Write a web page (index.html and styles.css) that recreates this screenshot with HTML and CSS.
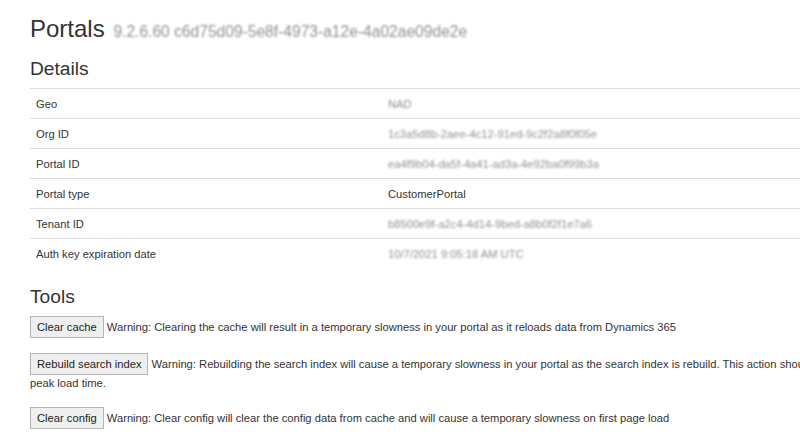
FILE: index.html
```html
<!DOCTYPE html>
<html lang="en">
<head>
<meta charset="utf-8">
<title>Portals</title>
<link rel="stylesheet" href="styles.css">
</head>
<body>
<div class="page">
  <h1 class="title">Portals <small class="redacted">9.2.6.60 c6d75d09-5e8f-4973-a12e-4a02ae09de2e</small></h1>

  <h2 class="section">Details</h2>
  <table class="details">
    <tbody>
      <tr><td class="key">Geo</td><td><span class="redacted">NAD</span></td></tr>
      <tr><td class="key">Org ID</td><td><span class="redacted">1c3a5d8b-2aee-4c12-91ed-9c2f2a8f0f05e</span></td></tr>
      <tr><td class="key">Portal ID</td><td><span class="redacted">ea4f9b04-da5f-4a41-ad3a-4e92ba0f99b3a</span></td></tr>
      <tr><td class="key">Portal type</td><td>CustomerPortal</td></tr>
      <tr><td class="key">Tenant ID</td><td><span class="redacted">b8500e9f-a2c4-4d14-9bed-a8b0f2f1e7a6</span></td></tr>
      <tr><td class="key">Auth key expiration date</td><td><span class="redacted">10/7/2021 9:05:18 AM UTC</span></td></tr>
    </tbody>
  </table>

  <h2 class="section tools-head">Tools</h2>
  <p class="tool"><button class="btn" type="button">Clear cache</button> Warning: Clearing the cache will result in a temporary slowness in your portal as it reloads data from Dynamics 365</p>
  <p class="tool"><button class="btn" type="button">Rebuild search index</button> Warning: Rebuilding the search index will cause a temporary slowness in your portal as the search index is rebuild. This action should be performed during non-peak load time.</p>
  <p class="tool"><button class="btn" type="button">Clear config</button> Warning: Clear config will clear the config data from cache and will cause a temporary slowness on first page load</p>
</div>
</body>
</html>
```

FILE: styles.css
```css
html {
  overflow: hidden;
}

body {
  margin: 0;
  background: #ffffff;
  color: #333333;
  font-family: "Liberation Sans", Arial, sans-serif;
  font-size: 11.2px;
  line-height: 16px;
}

.page {
  width: 933px;
  padding: 0 30px;
}

.title {
  margin: 15px 0 0;
  font-size: 24px;
  font-weight: 400;
  line-height: 28px;
}

.title small {
  font-size: 15.6px;
  line-height: 1;
  margin-left: 2px;
}

.redacted {
  color: #909090;
  filter: blur(1.2px);
  display: inline-block;
  line-height: 1;
}

.section {
  margin: 14px 0 7px;
  font-size: 19.2px;
  font-weight: 400;
  line-height: 24px;
}

.tools-head {
  margin-top: 17px;
}

.details {
  width: 100%;
  border-collapse: collapse;
}

.details td {
  border-top: 1px solid #dddddd;
  padding: 6px 6px;
  height: 17px;
  vertical-align: middle;
}

.details td.key {
  width: 340px;
}

.tool {
  margin: 0 0 15px;
  line-height: 17px;
}

.btn {
  font-family: "Liberation Sans", Arial, sans-serif;
  font-size: 11.2px;
  color: #222222;
  background: #efefef;
  border: 1px solid #b5b5b5;
  border-radius: 0;
  padding: 3px 6px;
  height: 22px;
  margin: 0;
  line-height: 14px;
}
```
